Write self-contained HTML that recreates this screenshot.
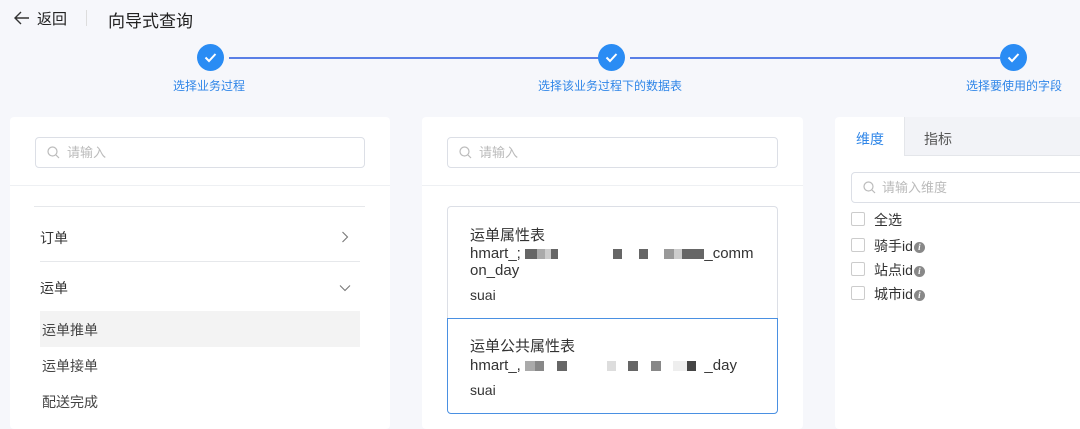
<!DOCTYPE html>
<html><head><meta charset="utf-8"><style>
*{margin:0;padding:0;box-sizing:border-box}
html,body{width:1080px;height:429px;overflow:hidden}
body{background:#f6f7fb;font-family:"Liberation Sans","Noto Sans CJK SC",sans-serif;color:#333;position:relative}
.a{position:absolute}
.panel{position:absolute;background:#fff;border-radius:4px;top:117px;height:312px}
.search{position:absolute;height:31px;border:1px solid #dcdfe6;border-radius:4px;background:#fff;font-size:13px;color:#bbb;line-height:29px;padding-left:31px}
.search svg{position:absolute;left:11px;top:8px}
.circ{position:absolute;width:27px;height:27px;border-radius:50%;background:#2a8cf4;top:44px}
.circ svg{position:absolute;left:7px;top:8px}
.lbl{position:absolute;top:77px;font-size:12px;color:#2f86e8;white-space:nowrap}
.t14{font-size:14px;color:#333}
.blk{display:inline-block;height:10px;vertical-align:middle;background:#666}
.cb{position:absolute;left:851px;width:14px;height:14px;border:1px solid #ccc;border-radius:2px;background:#fff}
.ci{display:inline-block;width:11px;height:11px;border-radius:50%;background:#888;color:#fff;font-size:9px;line-height:11px;text-align:center;font-style:italic;font-weight:bold;vertical-align:1px;margin-left:1px;font-family:"Liberation Serif",serif}
</style></head><body>
<svg class="a" style="left:14px;top:11px" width="16" height="14" viewBox="0 0 16 14"><path d="M7 1 1 7l6 6M1 7h14" fill="none" stroke="#333" stroke-width="1.4"/></svg>
<div class="a" style="left:37px;top:8px;font-size:15px;color:#222">返回</div>
<div class="a" style="left:86px;top:10px;width:1px;height:16px;background:#ddd"></div>
<div class="a" style="left:108px;top:7px;font-size:17px;color:#222">向导式查询</div>

<div class="a" style="left:229px;top:57px;width:370px;height:2px;background:#5a7fe6"></div>
<div class="a" style="left:630px;top:57px;width:370px;height:2px;background:#5a7fe6"></div>
<div class="circ" style="left:197px"><svg width="13" height="11" viewBox="0 0 13 11"><path d="M1.5 5.5l3.5 3.5 6.5-7" fill="none" stroke="#fff" stroke-width="2"/></svg></div>
<div class="circ" style="left:598px"><svg width="13" height="11" viewBox="0 0 13 11"><path d="M1.5 5.5l3.5 3.5 6.5-7" fill="none" stroke="#fff" stroke-width="2"/></svg></div>
<div class="circ" style="left:1000px"><svg width="13" height="11" viewBox="0 0 13 11"><path d="M1.5 5.5l3.5 3.5 6.5-7" fill="none" stroke="#fff" stroke-width="2"/></svg></div>
<div class="lbl" style="left:173px">选择业务过程</div>
<div class="lbl" style="left:538px">选择该业务过程下的数据表</div>
<div class="lbl" style="left:966px">选择要使用的字段</div>

<!-- left panel -->
<div class="panel" style="left:10px;width:380px"></div>
<div class="search" style="left:35px;top:137px;width:330px"><svg width="13" height="13" viewBox="0 0 13 13"><circle cx="5.5" cy="5.5" r="4.5" fill="none" stroke="#bbb" stroke-width="1.2"/><path d="M9 9l3 3" stroke="#bbb" stroke-width="1.2"/></svg>请输入</div>
<div class="a" style="left:10px;top:185px;width:380px;height:1px;background:#eef0f3"></div>
<div class="a" style="left:34px;top:206px;width:331px;height:1px;background:#e6e8eb"></div>
<div class="a t14" style="left:40px;top:228px">订单</div>
<svg class="a" style="left:341px;top:231px" width="8" height="12" viewBox="0 0 8 12"><path d="M1.5 1l5 5-5 5" fill="none" stroke="#777" stroke-width="1.1"/></svg>
<div class="a" style="left:40px;top:261px;width:320px;height:1px;background:#e6e8eb"></div>
<div class="a t14" style="left:40px;top:278px">运单</div>
<svg class="a" style="left:339px;top:284px" width="12" height="8" viewBox="0 0 12 8"><path d="M1 1.5l5 5 5-5" fill="none" stroke="#777" stroke-width="1.1"/></svg>
<div class="a" style="left:40px;top:311px;width:320px;height:36px;background:#f3f3f3"></div>
<div class="a t14" style="left:42px;top:320px;color:#444">运单推单</div>
<div class="a t14" style="left:42px;top:356px;color:#444">运单接单</div>
<div class="a t14" style="left:42px;top:392px;color:#444">配送完成</div>

<!-- middle -->
<div class="panel" style="left:422px;width:381px"></div>
<div class="search" style="left:447px;top:137px;width:331px"><svg width="13" height="13" viewBox="0 0 13 13"><circle cx="5.5" cy="5.5" r="4.5" fill="none" stroke="#bbb" stroke-width="1.2"/><path d="M9 9l3 3" stroke="#bbb" stroke-width="1.2"/></svg>请输入</div>
<div class="a" style="left:422px;top:185px;width:381px;height:1px;background:#eef0f3"></div>
<div class="a" style="left:447px;top:206px;width:331px;height:113px;border:1px solid #dcdfe6;border-bottom:none;border-radius:4px 4px 0 0"></div>
<div class="a" style="left:447px;top:318px;width:331px;height:96px;border:1px solid #4a90e2;border-radius:0 0 4px 4px"></div>
<div class="a t14" style="left:470px;top:224px;font-size:15px">运单属性表</div>
<div class="a" style="left:470px;top:245px;font-size:15px;line-height:17px;color:#333;width:300px;white-space:nowrap">hmart_; <span class="blk" style="width:12px"></span><span class="blk" style="width:8px;background:#aaa"></span><span class="blk" style="width:6px;background:#ccc"></span><span class="blk" style="width:7px"></span><span style="display:inline-block;width:55px"></span><span class="blk" style="width:9px"></span>&nbsp;&nbsp;&nbsp;&nbsp;<span class="blk" style="width:9px"></span>&nbsp;&nbsp;&nbsp;&nbsp;<span class="blk" style="width:10px;background:#999"></span><span class="blk" style="width:8px;background:#ccc"></span><span class="blk" style="width:22px"></span>_comm<br>on_day</div>
<div class="a" style="left:470px;top:287px;font-size:14px">suai</div>
<div class="a t14" style="left:470px;top:335px;font-size:15px">运单公共属性表</div>
<div class="a" style="left:470px;top:357px;font-size:15px;color:#333;white-space:nowrap">hmart_, <span class="blk" style="width:10px;background:#aaa"></span><span class="blk" style="width:9px;background:#888"></span>&nbsp;&nbsp;&nbsp;<span class="blk" style="width:10px"></span><span style="display:inline-block;width:40px"></span><span class="blk" style="width:9px;background:#ddd"></span>&nbsp;&nbsp;&nbsp;<span class="blk" style="width:10px"></span>&nbsp;&nbsp;&nbsp;<span class="blk" style="width:10px;background:#888"></span>&nbsp;&nbsp;&nbsp;<span class="blk" style="width:14px;background:#eee"></span><span class="blk" style="width:9px;background:#444"></span>&nbsp;&nbsp;_day</div>
<div class="a" style="left:470px;top:382px;font-size:14px">suai</div>

<!-- right -->
<div class="panel" style="left:835px;width:260px"></div>
<div class="a" style="left:904px;top:117px;width:176px;height:39px;background:#f2f3f7;border-left:1px solid #e4e6ea;border-bottom:1px solid #e4e6ea"></div>
<div class="a" style="left:856px;top:129px;font-size:14px;color:#2f86e8">维度</div>
<div class="a" style="left:924px;top:129px;font-size:14px;color:#555">指标</div>
<div class="search" style="left:851px;top:172px;width:240px;padding-left:30px"><svg width="13" height="13" viewBox="0 0 13 13"><circle cx="5.5" cy="5.5" r="4.5" fill="none" stroke="#bbb" stroke-width="1.2"/><path d="M9 9l3 3" stroke="#bbb" stroke-width="1.2"/></svg>请输入维度</div>
<div class="cb" style="top:212px"></div><div class="a" style="left:874px;top:210px;font-size:14px">全选</div>
<div class="cb" style="top:238px"></div><div class="a" style="left:874px;top:236px;font-size:14px">骑手id<span class="ci">i</span></div>
<div class="cb" style="top:262px"></div><div class="a" style="left:874px;top:260px;font-size:14px">站点id<span class="ci">i</span></div>
<div class="cb" style="top:286px"></div><div class="a" style="left:874px;top:284px;font-size:14px">城市id<span class="ci">i</span></div>
</body></html>
